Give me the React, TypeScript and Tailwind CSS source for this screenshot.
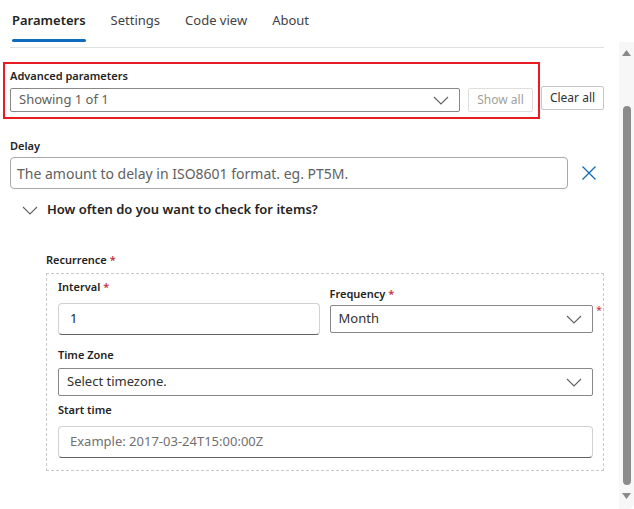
import React from "react";

const FONT = { fontFamily: '"Segoe UI", "Noto Sans", sans-serif' };

function Chevron({ className = "" }: { className?: string }) {
  return (
    <svg width="16" height="9" viewBox="0 0 16 9" className={className} fill="none">
      <path d="M1 1l7 7 7-7" stroke="#616161" strokeWidth="1.1" />
    </svg>
  );
}

function Req() {
  return <span className="text-[#c4314b] ml-[3px]">*</span>;
}

function Label({ children, className = "" }: { children: React.ReactNode; className?: string }) {
  return <div className={`text-[11px] leading-[16px] font-semibold text-[#242424] ${className}`}>{children}</div>;
}

function Dropdown({ text, className = "", dim = false }: { text: string; className?: string; dim?: boolean }) {
  return (
    <div
      className={`flex items-center justify-between border border-[#8a8886] rounded-[2px] pl-[8px] pr-[10px] ${className}`}
    >
      <span className={`text-[13px] ${dim ? "text-[#605e5c]" : "text-[#323130]"}`}>{text}</span>
      <Chevron />
    </div>
  );
}

function TextBox({ text, className = "", value = false }: { text: string; className?: string; value?: boolean }) {
  return (
    <div
      className={`flex items-center h-[32px] rounded-[4px] border border-[#d1d1d1] border-b-[#616161] px-[11px] ${className}`}
    >
      <span className={`text-[13px] ${value ? "text-[#242424]" : "text-[#707070]"}`}>{text}</span>
    </div>
  );
}

export default function App() {
  return (
    <div className="w-[634px] h-[509px] bg-white flex overflow-hidden" style={FONT}>
      <div className="w-[619px] pl-[10px] pr-[15px]">
        {/* tabs */}
        <div className="flex gap-[25px] pl-[2px] border-b border-[#e0e0e0] h-[48px]">
          <div className="flex flex-col items-center">
            <span className="text-[13px] leading-[20px] pt-[10px] font-semibold text-[#242424]">Parameters</span>
            <span className="mt-[9px] h-[3px] w-full rounded-full bg-[#0f6cbd]" />
          </div>
          <span className="text-[13px] leading-[20px] pt-[10px] text-[#424242]">Settings</span>
          <span className="text-[13px] leading-[20px] pt-[10px] text-[#424242]">Code view</span>
          <span className="text-[13px] leading-[20px] pt-[10px] text-[#424242]">About</span>
        </div>

        {/* advanced parameters */}
        <div className="flex items-end mt-[14px]">
          <div className="-ml-[7px] w-[537px] h-[57px] border-2 border-[#e81b23] px-[5px] pt-[4px]">
            <Label className="font-normal">Advanced parameters</Label>
            <div className="flex gap-[8px] mt-[4px]">
              <Dropdown text="Showing 1 of 1" dim className="w-[450px] h-[24px]" />
              <div className="w-[65px] h-[24px] flex items-center justify-center rounded-[2px] border border-[#e1dfdd] text-[12px] text-[#a19f9d]">
                Show all
              </div>
            </div>
          </div>
          <div className="ml-[1px] mb-[9px] w-[64px] h-[24px] flex items-center justify-center rounded-[2px] border border-[#c8c6c4] text-[12px] text-[#323130]">
            Clear all
          </div>
        </div>

        {/* delay */}
        <Label className="mt-[19px]">Delay</Label>
        <div className="flex items-center mt-[3px]">
          <div className="w-[558px] h-[32px] flex items-center rounded-[4px] border border-[#a8a8a8] px-[6px]">
            <span className="text-[14px] text-[#616161]">The amount to delay in ISO8601 format. eg. PT5M.</span>
          </div>
          <svg width="16" height="16" viewBox="0 0 16 16" className="ml-[13px]" fill="none">
            <path d="M1.5 1.5l13 13M14.5 1.5l-13 13" stroke="#0f6cbd" strokeWidth="1.3" />
          </svg>
        </div>

        {/* section toggle */}
        <div className="flex items-center mt-[11px] pl-[12px] h-[20px]">
          <Chevron />
          <span className="ml-[9px] text-[13px] font-semibold text-[#242424]">
            How often do you want to check for items?
          </span>
        </div>

        {/* recurrence */}
        <div className="pl-[36px] mt-[32px]">
          <Label>
            Recurrence
            <Req />
          </Label>
          <div className="mt-[5px] w-[558px] border border-dashed border-[#c8c8c8] pl-[11px] pr-[10px] pt-[5px] pb-[12px]">
            <div className="flex gap-[10px]">
              <div className="w-[262px]">
                <Label>
                  Interval
                  <Req />
                </Label>
                <TextBox text="1" value className="mt-[8px]" />
              </div>
              <div className="w-[264px] pt-[7px] relative">
                <Label>
                  Frequency
                  <Req />
                </Label>
                <Dropdown text="Month" className="mt-[3px] h-[28px]" />
                <span className="absolute -right-[9px] top-[23px] text-[11px] text-[#c4314b]">*</span>
              </div>
            </div>
            <Label className="mt-[12px]">Time Zone</Label>
            <Dropdown text="Select timezone." className="mt-[5px] h-[28px]" />
            <Label className="mt-[6px]">Start time</Label>
            <TextBox text="Example: 2017-03-24T15:00:00Z" className="mt-[8px]" />
          </div>
        </div>
      </div>

      {/* scrollbar */}
      <div className="w-[15px] mt-[42px] h-[467px] bg-[#f7f7f7] rounded-br-[6px] flex flex-col items-center">
        <svg width="9" height="6" viewBox="0 0 9 6" className="mt-[8px]">
          <path d="M4.5 0L9 6H0z" fill="#8a8a8a" />
        </svg>
        <div className="mt-[50px] w-[8px] h-[379px] rounded-full bg-[#8b8b8b]" />
        <svg width="9" height="6" viewBox="0 0 9 6" className="mt-[8px]">
          <path d="M0 0h9L4.5 6z" fill="#8a8a8a" />
        </svg>
      </div>
    </div>
  );
}
